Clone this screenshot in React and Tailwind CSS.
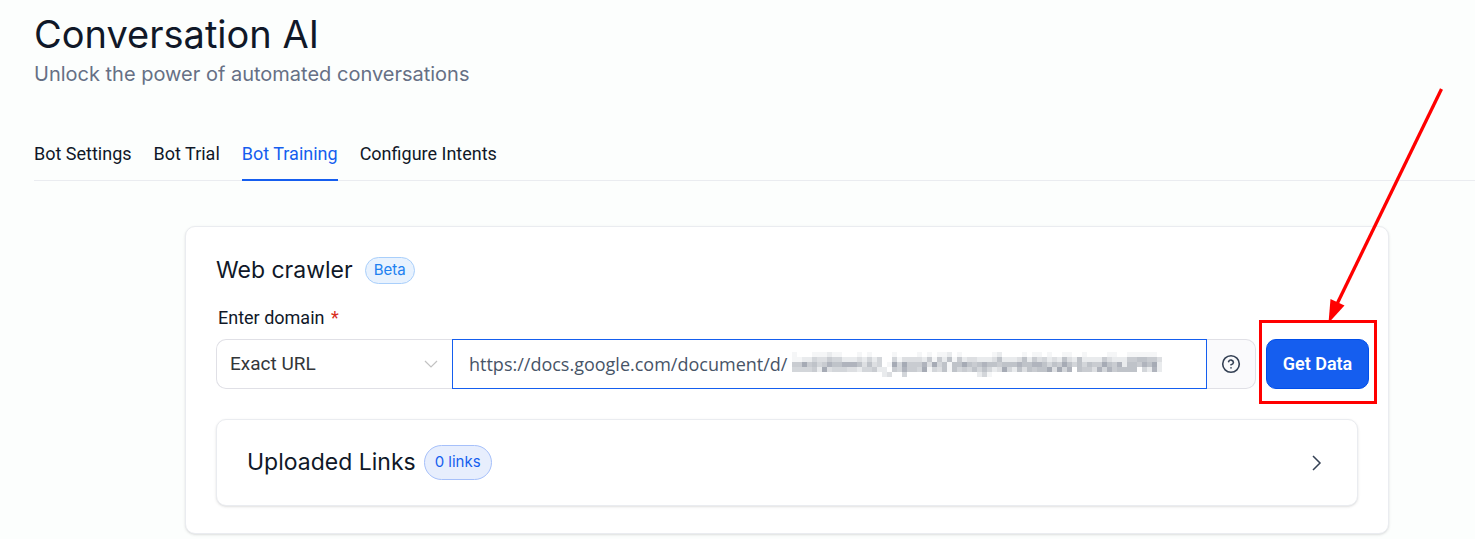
import React from 'react';

const tabs = ['Bot Settings', 'Bot Trial', 'Bot Training', 'Configure Intents'];

// Redacted part of the url, one digit per 5px block (0 = empty, 9 = darkest)
const maskRows = [
  '10001112110001010000100001010112010000001200001011010011001000011001111110',
  '11224335442223242400413333251526152332223622236253423263262222532225566553',
  '55856457667776363401848555738461668656766566676677646586464655865726657682',
  '44445283444332445220547554814361645464642384263656683847065537475666604272',
  '00000000000000000023004000000000000002410000000000000000000000000000000000',
];

const maskShades = ['none', '#f5f6f7', '#e9ebed', '#dddfe2', '#d3d6da', '#c9ccd1', '#bfc3c9', '#b0b4bd', '#a6abb5', '#9ca1ad'];

const MaskedText = () => (
  <svg width="370" height="25" viewBox="0 0 370 25" shapeRendering="crispEdges" aria-hidden="true">
    {maskRows.map((row, y) =>
      row.split('').map((level, x) => (
        <rect key={`${x}-${y}`} x={x * 5} y={y * 5} width="5" height="5" fill={maskShades[level]} />
      ))
    )}
  </svg>
);

const Header = () => (
  <header className="pl-[34px] pt-[11px]">
    <h1 className="text-[38px] leading-[46px] text-[#101828]">Conversation AI</h1>
    <p className="mt-px text-xl leading-8 text-[#667085]">Unlock the power of automated conversations</p>
  </header>
);

const Tabs = () => (
  <nav className="ml-[34px] mt-12 flex gap-[22px] border-b border-[#eaecf0] font-[Roboto,sans-serif] text-lg leading-8 text-[#101828]">
    {tabs.map((tab) => (
      <a
        key={tab}
        href="#"
        className={
          tab === 'Bot Training'
            ? '-mb-px border-b-2 border-[#155eef] pb-[9px] text-[#155eef]'
            : 'pb-[9px]'
        }
      >
        {tab}
      </a>
    ))}
  </nav>
);

// Red frame round the button with an arrow pointing at it
const Callout = () => (
  <>
    <div className="pointer-events-none absolute -left-[7px] -top-[19px] h-[84px] w-[118px] border-3 border-[#ff0000]" />
    <svg className="pointer-events-none absolute -top-[252px] left-[59px]" width="120" height="240" viewBox="0 0 120 240" fill="#ff0000">
      <path d="M116.5 2L12 217" stroke="#ff0000" strokeWidth="3.3" />
      <path d="M3.5 236L5.5 212L19.5 218.5Z" />
    </svg>
  </>
);

const CrawlerForm = () => (
  <form className="font-[Roboto,sans-serif]">
    <label htmlFor="domain" className="ml-0.5 mt-[18px] block text-lg leading-7 text-[#101828]">
      Enter domain <span className="ml-0.5 text-[#d92d20]">*</span>
    </label>
    <div className="-mr-[11px] mt-[7px] flex h-[50px]">
      <div className="relative w-[236px]">
        <select
          aria-label="Match type"
          className="h-full w-full appearance-none rounded-l-[10px] border border-r-0 border-[#e0e0e6] bg-white px-[13px] text-[19px] text-[#333639]"
        >
          <option>Exact URL</option>
        </select>
        <svg className="pointer-events-none absolute right-3.5 top-5 text-[#c2c2c2]" width="14" height="10" viewBox="0 0 14 10" fill="none" stroke="currentColor" strokeWidth="1.2">
          <path d="M1 2l6 6 6-6" />
        </svg>
      </div>
      <div className="relative flex-1">
        <input
          id="domain"
          type="text"
          defaultValue="https://docs.google.com/document/d/"
          className="h-full w-full border border-[#155eef] bg-white px-4 font-['Open_Sans',sans-serif] text-lg text-[#475467] outline-none"
        />
        <div className="pointer-events-none absolute left-[340px] top-[13px]">
          <MaskedText />
        </div>
      </div>
      <button type="button" aria-label="Help" className="flex w-[49px] items-center justify-center rounded-r-[10px] border border-l-0 border-[#e0e0e6] bg-[#fafafc] text-[#344054]">
        <svg width="20" height="20" viewBox="0 0 20 20" fill="none" stroke="currentColor" strokeWidth="1.6" strokeLinecap="round" strokeLinejoin="round">
          <circle cx="10" cy="10" r="8.3" />
          <path d="M7.6 7.6a2.5 2.5 0 0 1 4.8.8c0 1.6-2.4 2.3-2.4 2.3M10 13.8v.1" />
        </svg>
      </button>
      <div className="relative ml-2.5">
        <button type="submit" className="h-full w-[103px] rounded-[10px] border border-[#004eeb] bg-[#155eef] text-lg font-semibold text-white">
          Get Data
        </button>
        <Callout />
      </div>
    </div>
  </form>
);

const UploadedLinks = () => (
  <section className="mt-[30px] flex h-[87px] items-center rounded-[10px] border border-[#eaecf0] bg-white px-[30px] shadow-sm">
    <h2 className="text-[23px] text-[#101828]">Uploaded Links</h2>
    <span className="ml-2 flex h-[35px] items-center rounded-full border border-[#a6c0fa] bg-[#e7eefd] px-2.5 text-[15px] text-[#155eef]">0 links</span>
    <button type="button" aria-label="Expand" className="ml-auto mr-[5px] text-[#344054]">
      <svg width="10" height="16" viewBox="0 0 10 16" fill="none" stroke="currentColor" strokeWidth="1.5">
        <path d="M1 1l7 7-7 7" />
      </svg>
    </button>
  </section>
);

const App = () => {
  return (
    <div className="min-h-screen bg-[#fcfefd] font-[Inter,sans-serif]">
      <Header />
      <Tabs />
      <main className="ml-[185px] mr-[86px] mt-[45px] rounded-[10px] border border-[#eaecf0] bg-white px-[30px] pb-[27px] pt-[27px] shadow-sm">
        <div className="flex items-center">
          <h2 className="text-[23px] leading-8 text-[#101828]">Web crawler</h2>
          <span className="ml-3 flex h-[27px] items-center rounded-full border border-[#a9cffb] bg-[#e8f2fe] px-2 text-[15px] text-[#2080f0]">Beta</span>
        </div>
        <CrawlerForm />
        <UploadedLinks />
      </main>
    </div>
  );
};

export default App;
